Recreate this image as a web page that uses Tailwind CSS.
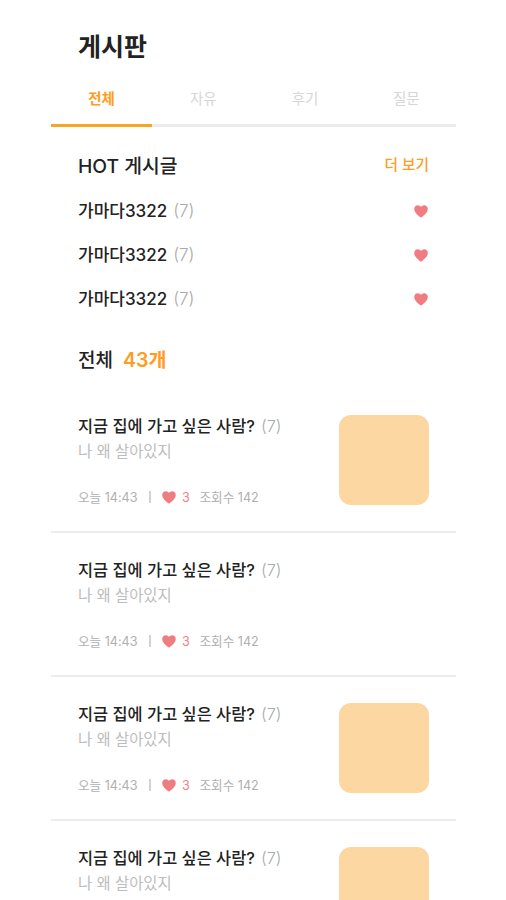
<!DOCTYPE html>
<html lang="ko">
<head>
<meta charset="utf-8">
<title>게시판</title>
<script src="https://cdn.jsdelivr.net/npm/@tailwindcss/browser@4"></script>
</head>
<body class="h-[900px] overflow-hidden bg-white font-['Inter','Noto_Sans_CJK_KR',sans-serif] text-[#222] whitespace-nowrap">
<svg class="hidden"><symbol id="heart" viewBox="0 0 14 13"><path d="M7 12.8C5 11.2 0.2 7.8 0.2 4.1C0.2 1.8 1.8 0.3 3.8 0.3C5.2 0.3 6.4 1 7 2.1C7.6 1 8.8 0.3 10.2 0.3C12.2 0.3 13.8 1.8 13.8 4.1C13.8 7.8 9 11.2 7 12.8Z" fill="#f17c80"/></symbol></svg>
<main class="ml-[51px] h-[900px] w-[405px] overflow-hidden pt-[26px]">
  <h1 class="flex h-11 items-center pl-[27px] text-[25px] font-semibold"><span>게시판</span></h1>
  <nav class="mt-1 grid h-[53px] grid-cols-4 border-b-[3px] border-[#ebebeb] text-center text-[14.5px] leading-[50px] text-[#d6d6d6]">
    <a class="-mb-[3px] border-b-[3px] border-[#f5a623] font-bold text-[#ff9d1e]">전체</a>
    <a class="pl-px">자유</a>
    <a class="pl-0.5">후기</a>
    <a class="pl-0.5">질문</a>
  </nav>
  <section class="px-[27px] pt-[23px]">
    <div class="flex h-8 items-center justify-between">
      <h2 class="text-[19.3px] font-medium">HOT 게시글</h2>
      <a class="-mt-0.5 text-[14.7px] font-medium text-[#ff9d1e]">더 보기</a>
    </div>
    <ul class="mt-[7px]" id="hot"></ul>
  </section>
  <h2 class="flex h-[68px] items-center gap-2.5 pt-3 pl-[27px] text-[19px] font-medium"><span>전체</span><span class="text-[19.6px] font-semibold text-[#ff9d1e]">43개</span></h2>
  <section id="posts"></section>
</main>
<template id="hot-row">
  <li class="flex h-11 items-center justify-between text-[17px]">
    <p class="flex gap-1.5 pt-0.5"><span class="font-medium">가마다3322</span><span class="font-light text-[#aaa]">(7)</span></p>
    <svg class="mr-px h-[13px] w-3.5"><use href="#heart"/></svg>
  </li>
</template>
<template id="post">
  <article class="flex h-36 justify-between border-b-2 border-[#ededed] px-[27px] pt-[22px]">
    <div>
      <h3 class="flex h-7 items-center gap-1.5 pt-0.5 text-[16.4px]"><span class="font-medium">지금 집에 가고 싶은 사람?</span><span class="font-light text-[#aaa]">(7)</span></h3>
      <p class="flex h-6 items-center pt-px text-[15.4px] text-[#bdbdbd]">나 왜 살아있지</p>
      <div class="meta mt-[22px] flex h-6 items-center text-[12.6px] text-[#b0b0b0]"><span class="w-[71px] pt-0.5">오늘 14:43</span><span class="mr-[11px] h-3 w-0.5 bg-[#d2d2d2]"></span><svg class="mt-px h-[13px] w-3.5"><use href="#heart"/></svg><span class="ml-1.5 w-[17.5px] pt-0.5 text-[#f17c80]">3</span><span class="pt-0.5">조회수 142</span></div>
    </div>
    <div class="thumb mt-1 size-[90px] rounded-[12px] bg-[#fdd7a2]"></div>
  </article>
</template>
<script>
  const add = (id, target) => {
    const node = document.getElementById(id).content.cloneNode(true);
    document.getElementById(target).append(node);
    return document.getElementById(target).lastElementChild;
  };
  for (let i = 0; i < 3; i++) add('hot-row', 'hot');
  const posts = [
    { thumb: true, meta: true },
    { thumb: false, meta: true },
    { thumb: true, meta: true },
    { thumb: true, meta: false },
  ];
  posts.forEach(({ thumb, meta }) => {
    const post = add('post', 'posts');
    if (!thumb) post.querySelector('.thumb').remove();
    if (!meta) post.querySelector('.meta').remove();
  });
</script>
</body>
</html>
